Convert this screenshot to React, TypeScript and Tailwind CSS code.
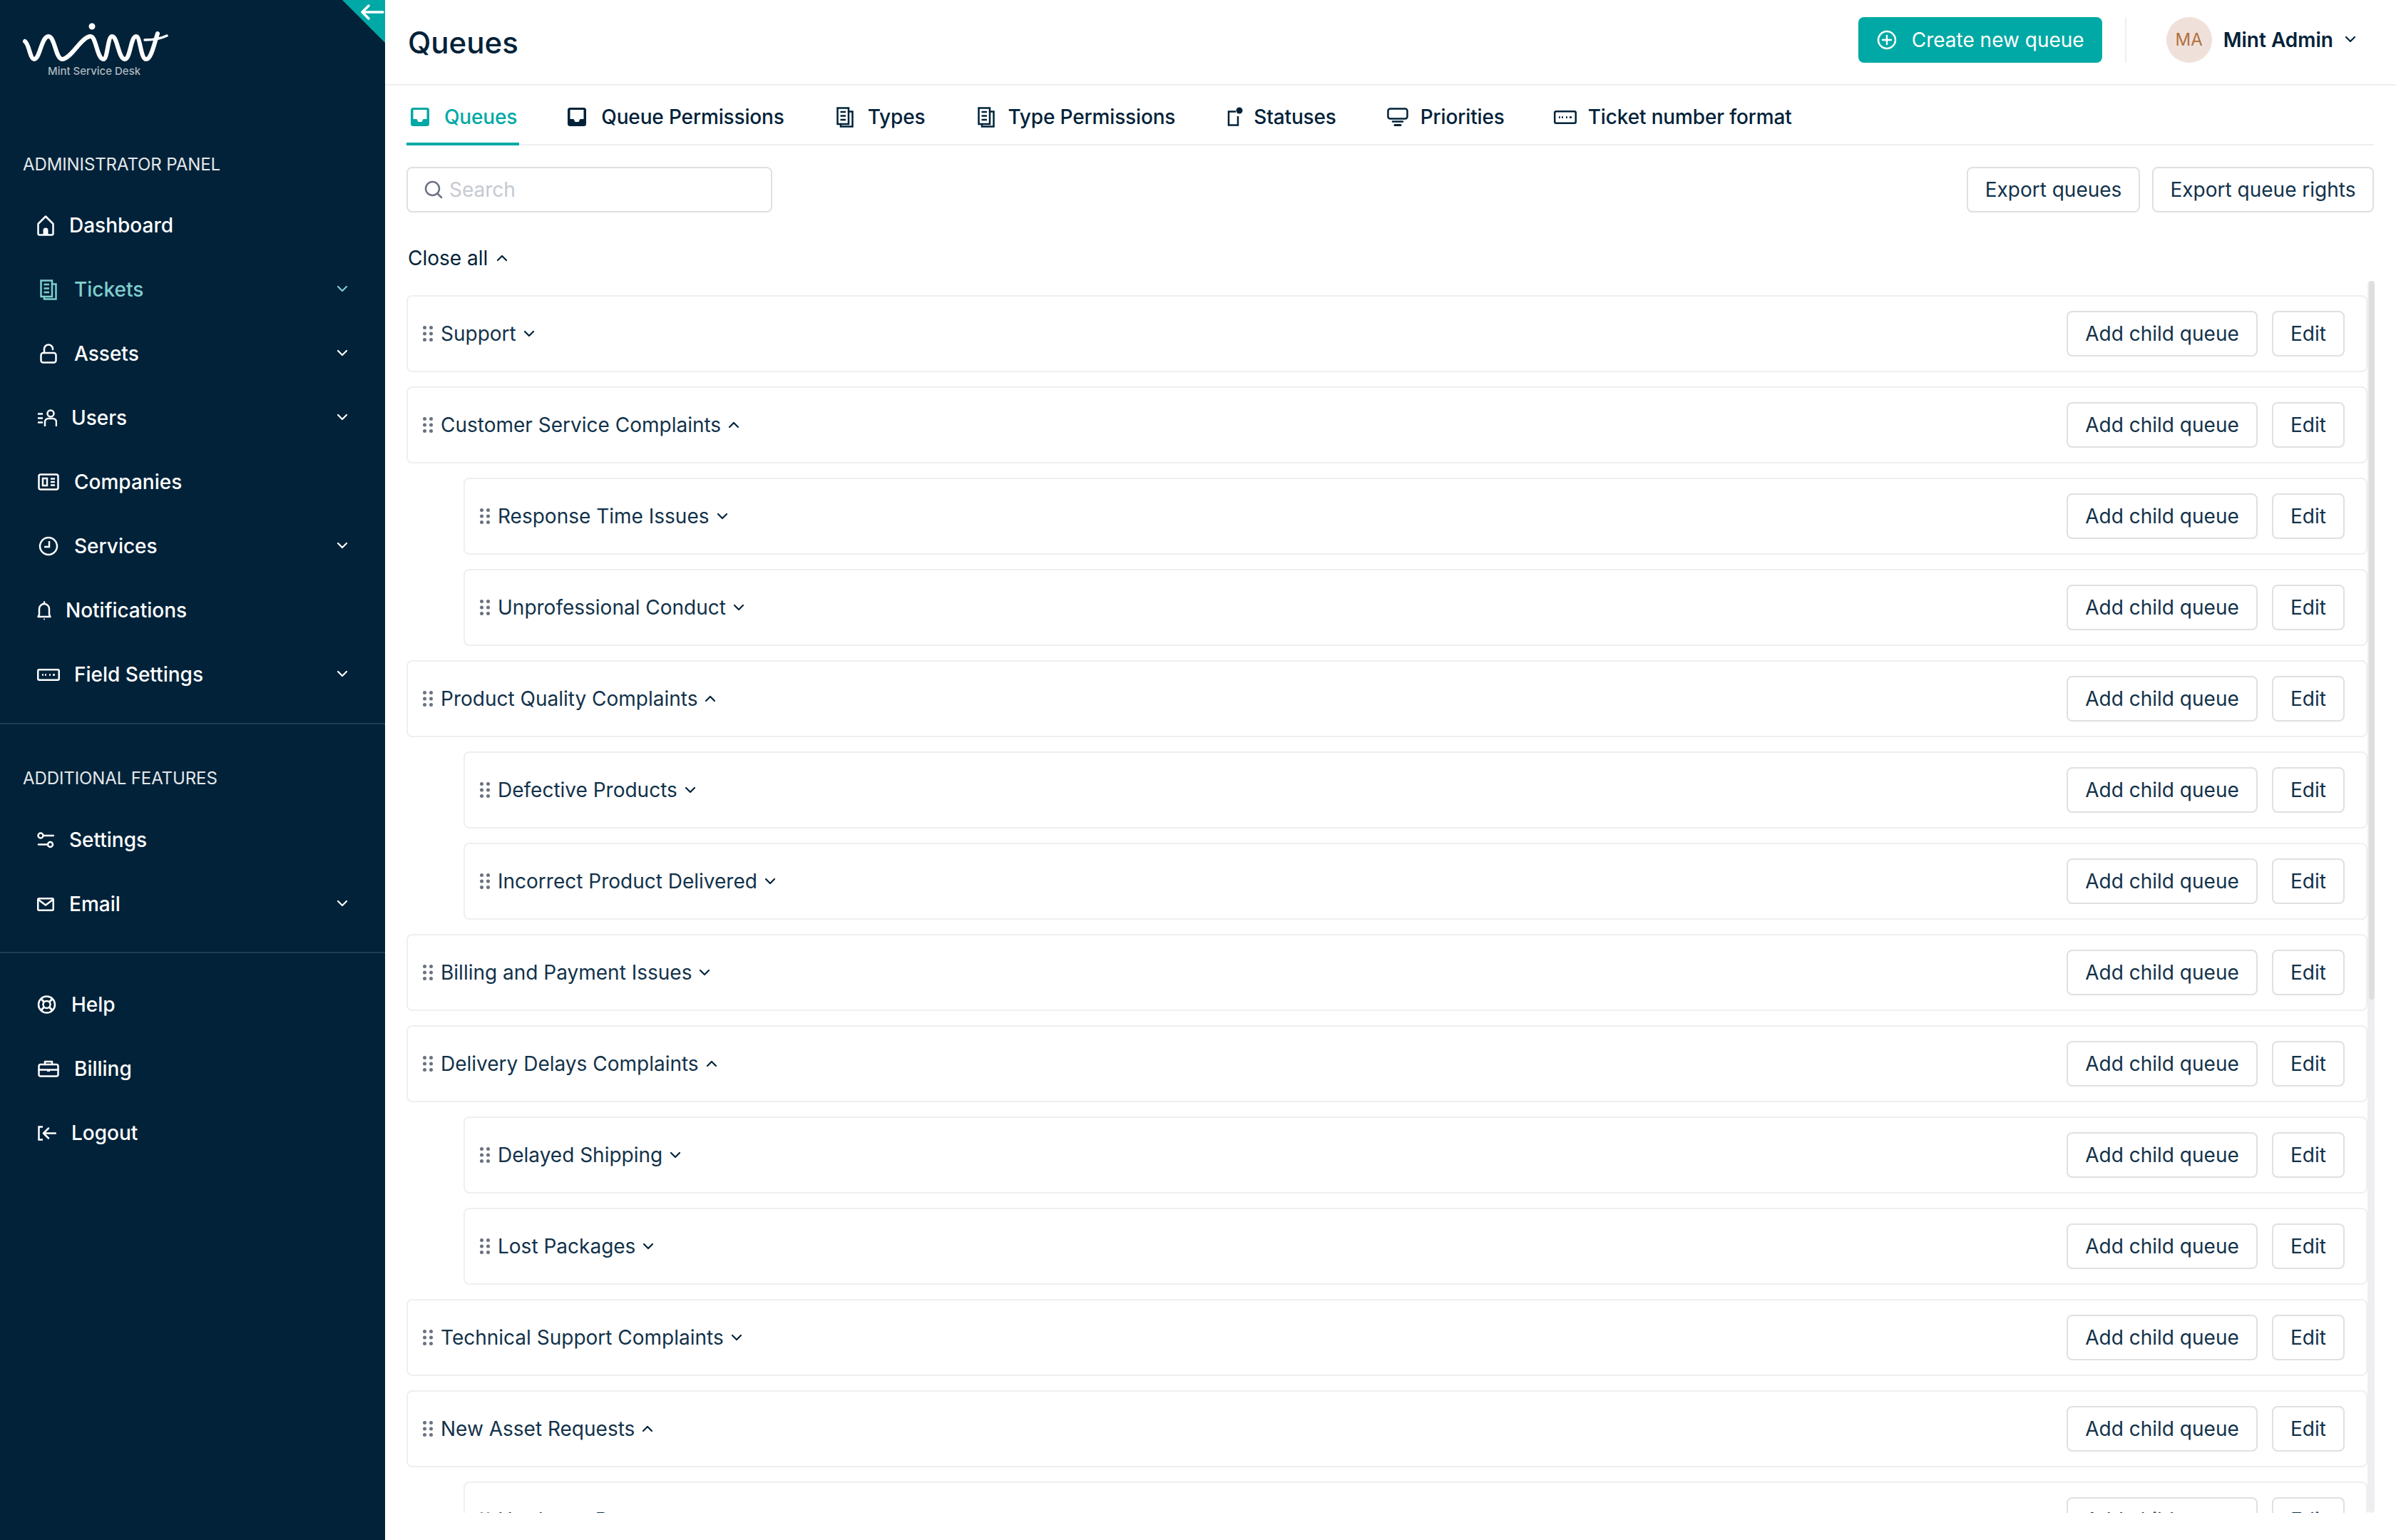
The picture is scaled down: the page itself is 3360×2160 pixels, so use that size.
import React from 'react';

const IconBase: React.FC<{ w: number; h: number; className?: string; children: React.ReactNode }> = ({ w, h, className, children }) => (
  <svg width={w} height={h} viewBox={`0 0 ${w} ${h}`} fill="none" stroke="currentColor" strokeWidth={2.5} strokeLinecap="round" strokeLinejoin="round" className={`shrink-0 ${className ?? ''}`}>
    {children}
  </svg>
);

const Chevron: React.FC<{ up?: boolean; className?: string }> = ({ up, className }) => (
  <svg width="16" height="10" viewBox="0 0 16 10" fill="none" stroke="currentColor" strokeWidth={2.2} strokeLinecap="round" strokeLinejoin="round" className={`shrink-0 ${className ?? ''}`}>
    <path d={up ? 'M2 8 L8 2 L14 8' : 'M2 2 L8 8 L14 2'} />
  </svg>
);

const HomeIcon = () => (
  <IconBase w={24} h={29}>
    <path d="M1.5 12 L12 1.5 L22.5 12 V25.5 a2 2 0 0 1 -2 2 H3.5 a2 2 0 0 1 -2 -2 Z" />
    <path d="M8.5 27.5 V21 a3.5 3.5 0 0 1 7 0 V27.5 Z" fill="currentColor" stroke="none" />
  </IconBase>
);

const DocsIcon: React.FC<{ className?: string }> = ({ className }) => (
  <IconBase w={24} h={29} className={className}>
    <path d="M1.5 1.5 H17 V24 H1.5 Z" strokeLinejoin="miter" />
    <path d="M17 6.5 H22.5 V27.5 H6 V24" strokeLinejoin="miter" />
    <path d="M5.5 7 H13 M5.5 12.5 H13 M5.5 18 H13" strokeLinecap="butt" />
  </IconBase>
);

const LockIcon = () => (
  <IconBase w={24} h={28}>
    <rect x="1.5" y="13" width="21" height="13.5" rx="3" />
    <path d="M6 13 V7.5 a6 6 0 0 1 12 0 V8" />
  </IconBase>
);

const UsersIcon = () => (
  <IconBase w={28} h={25}>
    <circle cx="19" cy="6" r="4.5" />
    <path d="M11 24 V18 a5 5 0 0 1 5 -5 H22 a5 5 0 0 1 5 5 V24" strokeLinecap="butt" />
    <path d="M1 6.5 H8 M1 12.5 H8 M1 18.5 H8" strokeLinecap="butt" />
  </IconBase>
);

const CompanyIcon = () => (
  <IconBase w={30} h={24}>
    <rect x="1.5" y="1.5" width="27" height="21" rx="2.5" />
    <rect x="7" y="7" width="6" height="10" strokeLinejoin="miter" />
    <path d="M18 7.5 H24 M18 12 H24 M18 16.5 H24" strokeLinecap="butt" />
  </IconBase>
);

const ClockIcon = () => (
  <IconBase w={28} h={28}>
    <circle cx="14" cy="14" r="12" />
    <path d="M15 7 V15 H8" strokeLinecap="butt" strokeLinejoin="miter" />
  </IconBase>
);

const BellIcon = () => (
  <IconBase w={20} h={27}>
    <path d="M1.5 22 H18.5 L17 19 V11 a7 7 0 0 0 -14 0 V19 Z" />
    <path d="M10 1.5 V3" />
    <circle cx="10" cy="25.5" r="1" fill="currentColor" stroke="none" />
  </IconBase>
);

const FieldIcon: React.FC<{ w?: number; h?: number }> = ({ w = 32, h = 17 }) => (
  <IconBase w={w} h={h}>
    <rect x="1.25" y="1.25" width={w - 2.5} height={h - 2.5} rx="2" />
    <path d={`M7 ${h / 2} H9 M${w / 2 - 5} ${h / 2} H${w / 2 - 3} M${w / 2 + 1} ${h / 2} H${w / 2 + 3} M${w - 10} ${h / 2} H${w - 7}`} strokeLinecap="butt" />
  </IconBase>
);

const SlidersIcon = () => (
  <IconBase w={24} h={23}>
    <circle cx="5" cy="5" r="3.5" />
    <path d="M9 5 H23" />
    <path d="M2 17.5 H14" />
    <circle cx="18.5" cy="17.5" r="3.5" />
  </IconBase>
);

const MailIcon = () => (
  <IconBase w={24} h={19}>
    <rect x="1.25" y="1.25" width="21.5" height="16.5" rx="1.5" />
    <path d="M2 3 L12 10.5 L22 3" />
  </IconBase>
);

const HelpIcon = () => (
  <IconBase w={27} h={26}>
    <circle cx="13.5" cy="13" r="11.5" />
    <circle cx="13.5" cy="13" r="5" />
    <path d="M5.5 5 L10 9.5 M21.5 5 L17 9.5 M5.5 21 L10 16.5 M21.5 21 L17 16.5" strokeWidth={3} strokeLinecap="butt" />
  </IconBase>
);

const CaseIcon = () => (
  <IconBase w={30} h={24}>
    <rect x="1.5" y="6" width="27" height="16.5" rx="2.5" />
    <path d="M10 6 V2 H20 V6" />
    <path d="M1.5 13.5 H28.5" />
    <path d="M13 13.5 H17 V16 H13 Z" fill="currentColor" stroke="none" />
  </IconBase>
);

const LogoutIcon = () => (
  <IconBase w={26} h={21}>
    <path d="M7 1.5 H1.5 V19.5 H7" strokeLinecap="butt" strokeLinejoin="miter" />
    <path d="M25 10.5 H8 M15 3.5 L8 10.5 L15 17.5" />
  </IconBase>
);

const InboxIcon = () => (
  <svg width="28" height="28" viewBox="0 0 28 28" className="shrink-0">
    <rect x="1" y="1" width="26" height="26" rx="3.5" fill="currentColor" />
    <path d="M4.5 4 H23.5 V17 H18.5 L16.5 21 H11.5 L9.5 17 H4.5 Z" fill="#ffffff" />
  </svg>
);

const StatusIcon = () => (
  <IconBase w={22} h={28}>
    <path d="M12 6.5 H2 V25.5 H15 V13" strokeLinecap="butt" strokeLinejoin="miter" />
    <circle cx="17" cy="5" r="4.5" fill="currentColor" stroke="none" />
  </IconBase>
);

const PriorityIcon = () => (
  <IconBase w={30} h={26}>
    <rect x="1.5" y="1.5" width="27" height="14" rx="3" />
    <path d="M8 19.5 H22" />
    <path d="M11 24.5 H19" strokeWidth={3} />
  </IconBase>
);

const PlusCircleIcon = () => (
  <IconBase w={28} h={28}>
    <circle cx="14" cy="14" r="12" />
    <path d="M14 8 V20 M8 14 H20" />
  </IconBase>
);

const SearchIcon = () => (
  <IconBase w={26} h={26}>
    <circle cx="11.5" cy="11.5" r="9.5" />
    <path d="M18.5 18.5 L24 24" />
  </IconBase>
);

const GripIcon = () => (
  <svg width="14" height="22" viewBox="0 0 14 22" fill="#6b7280" className="shrink-0">
    <circle cx="2.5" cy="2.5" r="2.5" />
    <circle cx="11.5" cy="2.5" r="2.5" />
    <circle cx="2.5" cy="11" r="2.5" />
    <circle cx="11.5" cy="11" r="2.5" />
    <circle cx="2.5" cy="19.5" r="2.5" />
    <circle cx="11.5" cy="19.5" r="2.5" />
  </svg>
);

const Logo = () => (
  <svg width="204" height="58" viewBox="0 0 204 58" fill="none" stroke="#ffffff" strokeWidth={6} strokeLinecap="round" strokeLinejoin="round" className="shrink-0">
    <path d="M3 26 C9 30 10 51 16 51 C24 51 26 19 36 19 C45 19 46 51 55 51 C68 51 82 19 95 19 C103 19 104 51 113 51 C119 51 119 19 125 19 C133 19 134 51 143 51 C151 51 151 19 159 19 C165 19 165 51 173 51 C180 51 184 30 189 15" />
    <path d="M171 24 C181 24 194 22 202 18" strokeWidth={3.5} />
    <circle cx="97" cy="5" r="4.5" fill="#ffffff" stroke="none" />
  </svg>
);

type NavEntry = { label: string; icon: React.ReactNode; iconBox: string; caret?: boolean; active?: boolean };

const mainNav: NavEntry[] = [
  { label: 'Dashboard', icon: <HomeIcon />, iconBox: 'w-[45px]' },
  { label: 'Tickets', icon: <DocsIcon />, iconBox: 'w-[52px] pl-[4px]', caret: true, active: true },
  { label: 'Assets', icon: <LockIcon />, iconBox: 'w-[52px] pl-[4px]', caret: true },
  { label: 'Users', icon: <UsersIcon />, iconBox: 'w-[48px]', caret: true },
  { label: 'Companies', icon: <CompanyIcon />, iconBox: 'w-[52px] pl-[1px]' },
  { label: 'Services', icon: <ClockIcon />, iconBox: 'w-[52px] pl-[2px]', caret: true },
  { label: 'Notifications', icon: <BellIcon />, iconBox: 'w-[40px]' },
  { label: 'Field Settings', icon: <FieldIcon />, iconBox: 'w-[52px]', caret: true },
];

const extraNav: NavEntry[] = [
  { label: 'Settings', icon: <SlidersIcon />, iconBox: 'w-[45px]' },
  { label: 'Email', icon: <MailIcon />, iconBox: 'w-[45px]', caret: true },
];

const footerNav: NavEntry[] = [
  { label: 'Help', icon: <HelpIcon />, iconBox: 'w-[48px]' },
  { label: 'Billing', icon: <CaseIcon />, iconBox: 'w-[52px] pl-[1px]' },
  { label: 'Logout', icon: <LogoutIcon />, iconBox: 'w-[48px] pl-[1px]' },
];

const NavItem: React.FC<{ item: NavEntry }> = ({ item }) => (
  <div className={`flex h-[90px] items-center pl-[52px] pr-[52px] text-[28px] font-medium ${item.active ? 'text-[#80cfcf]' : 'text-white'}`}>
    <span className={`flex shrink-0 items-center ${item.iconBox}`}>{item.icon}</span>
    <span className="flex-1">{item.label}</span>
    {item.caret && <Chevron className="-mt-[3px]" />}
  </div>
);

const Sidebar = () => (
  <aside className="relative flex h-full w-[540px] shrink-0 flex-col bg-[#012239]">
    <svg width="60" height="60" viewBox="0 0 60 60" className="absolute top-0 right-0">
      <path d="M0 0 H60 V60 Z" fill="#00a9a5" />
      <path d="M57 17 H29 M37 8 L28 17 L37 26" fill="none" stroke="#ffffff" strokeWidth={3.5} strokeLinecap="round" strokeLinejoin="round" />
    </svg>
    <div className="flex h-[213px] flex-col pt-[32px] pl-[32px]">
      <Logo />
      <span className="ml-[35px] text-[15px] leading-[20px] font-medium text-[#aeb7bf]">Mint Service Desk</span>
    </div>
    <p className="pl-[32px] text-[24px] leading-[36px] tracking-[-0.1px] text-[#e4e8eb]">ADMINISTRATOR PANEL</p>
    <nav className="mt-[22px] flex flex-col">
      {mainNav.map((item) => (
        <NavItem key={item.label} item={item} />
      ))}
    </nav>
    <div className="mt-[23px] h-[2px] bg-[#1b3c53]" />
    <p className="mt-[58px] pl-[32px] text-[24px] leading-[36px] tracking-[-0.1px] text-[#e4e8eb]">ADDITIONAL FEATURES</p>
    <nav className="mt-[23px] flex flex-col">
      {extraNav.map((item) => (
        <NavItem key={item.label} item={item} />
      ))}
    </nav>
    <div className="mt-[22px] h-[2px] bg-[#1b3c53]" />
    <nav className="mt-[27px] flex flex-col">
      {footerNav.map((item) => (
        <NavItem key={item.label} item={item} />
      ))}
    </nav>
  </aside>
);

const tabs: { label: string; icon: React.ReactNode; box: string; offset?: string }[] = [
  { label: 'Queues', icon: <InboxIcon />, box: 'w-[48px]' },
  { label: 'Queue Permissions', icon: <InboxIcon />, box: 'w-[48px]' },
  { label: 'Types', icon: <DocsIcon />, box: 'w-[44px]', offset: 'ml-[3px]' },
  { label: 'Type Permissions', icon: <DocsIcon />, box: 'w-[42px]', offset: 'ml-[4px]' },
  { label: 'Statuses', icon: <StatusIcon />, box: 'w-[37px]', offset: 'ml-[3px]' },
  { label: 'Priorities', icon: <PriorityIcon />, box: 'w-[47px]', offset: 'ml-[1px]' },
  { label: 'Ticket number format', icon: <FieldIcon w={32} h={19} />, box: 'w-[48px]', offset: '-ml-[1px]' },
];

const Tabs = () => (
  <div className="mr-[31px] ml-[30px] flex h-[84px] shrink-0 items-stretch gap-[62px] border-b-2 border-[#efefef]">
    {tabs.map((tab, i) => (
      <div
        key={tab.label}
        className={`-mb-[2px] flex items-center pr-[3px] pl-[5px] text-[28px] font-medium tracking-[-0.15px] ${tab.offset ?? ''} ${i === 0 ? 'border-b-4 border-[#00a9a5] pt-[8px] text-[#00a9a5]' : 'pt-[4px] text-[#012239]'}`}
      >
        <span className={`flex shrink-0 items-center ${tab.box}`}>{tab.icon}</span>
        {tab.label}
      </div>
    ))}
  </div>
);

const OutlineButton: React.FC<{ label: string; className?: string }> = ({ label, className }) => (
  <button className={`flex h-[64px] items-center justify-center rounded-lg border-2 border-[#e0e0e0] bg-white text-[28px] text-[#12324a] ${className ?? ''}`}>
    {label}
  </button>
);

type Queue = { name: string; open?: boolean; child?: boolean };

const queues: Queue[] = [
  { name: 'Support' },
  { name: 'Customer Service Complaints', open: true },
  { name: 'Response Time Issues', child: true },
  { name: 'Unprofessional Conduct', child: true },
  { name: 'Product Quality Complaints', open: true },
  { name: 'Defective Products', child: true },
  { name: 'Incorrect Product Delivered', child: true },
  { name: 'Billing and Payment Issues' },
  { name: 'Delivery Delays Complaints', open: true },
  { name: 'Delayed Shipping', child: true },
  { name: 'Lost Packages', child: true },
  { name: 'Technical Support Complaints' },
  { name: 'New Asset Requests', open: true },
  { name: 'Hardware Requests', child: true },
];

const QueueRow: React.FC<{ queue: Queue }> = ({ queue }) => (
  <div className={`flex h-[108px] shrink-0 items-center rounded-lg border-2 border-[#efefef] pr-[30px] pl-[21px] ${queue.child ? 'ml-[80px]' : ''}`}>
    <GripIcon />
    <span className="ml-[11px] text-[28px] text-[#12324a]">{queue.name}</span>
    <Chevron up={queue.open} className="ml-[10px] text-[#012239]" />
    <div className="ml-auto flex gap-[20px]">
      <OutlineButton label="Add child queue" className="w-[268px]" />
      <OutlineButton label="Edit" className="w-[102px]" />
    </div>
  </div>
);

const Header = () => (
  <header className="flex h-[120px] shrink-0 items-start border-b-2 border-[#efefef] pt-[24px] pr-[56px] pl-[32px]">
    <h1 className="mt-[12px] text-[42px] leading-[48px] font-medium text-[#012239]">Queues</h1>
    <button className="ml-auto flex h-[64px] w-[342px] items-center rounded-lg bg-[#00a9a5] pl-[26px] text-[28px] text-white">
      <PlusCircleIcon />
      <span className="ml-[21px]">Create new queue</span>
    </button>
    <div className="ml-[32px] h-[64px] w-[2px] bg-[#efefef]" />
    <div className="ml-[56px] flex h-[64px] w-[64px] items-center justify-center rounded-full bg-[#efe1d9] text-[24px] text-[#b0713f]">MA</div>
    <span className="mt-[13px] ml-[16px] text-[28px] leading-[38px] font-semibold text-[#012239]">Mint Admin</span>
    <Chevron className="mt-[26px] ml-[16px] text-[#012239]" />
  </header>
);

export default function App() {
  return (
    <div className="flex h-[2160px] w-[3360px] overflow-hidden bg-white font-['Inter',sans-serif]">
      <Sidebar />
      <main className="flex min-w-0 flex-1 flex-col">
        <Header />
        <Tabs />
        <div className="mt-[30px] mr-[31px] ml-[30px] flex items-center justify-between">
          <div className="flex h-[64px] w-[513px] items-center rounded-lg border-2 border-[#e0e0e0] pl-[23px] text-[#6b7280]">
            <SearchIcon />
            <span className="ml-[9px] text-[28px] text-[#c5cad0]">Search</span>
          </div>
          <div className="flex gap-[17px]">
            <OutlineButton label="Export queues" className="w-[243px]" />
            <OutlineButton label="Export queue rights" className="w-[311px]" />
          </div>
        </div>
        <div className="mt-[46px] ml-[32px] flex items-center gap-[12px] text-[28px] leading-[36px] text-[#012239]">
          Close all
          <Chevron up />
        </div>
        <div className="mt-[14px] mr-[30px] ml-[30px] flex h-[1728px] min-h-0">
          <div className="flex min-w-0 flex-1 flex-col gap-[20px] overflow-hidden pt-[20px]">
            {queues.map((q) => (
              <QueueRow key={q.name} queue={q} />
            ))}
          </div>
          <div className="flex w-[10px] shrink-0 justify-end rounded-full bg-[#eceef0]">
            <div className="h-[1008px] w-[8px] rounded-full bg-[#dedede]" />
          </div>
        </div>
      </main>
    </div>
  );
}
